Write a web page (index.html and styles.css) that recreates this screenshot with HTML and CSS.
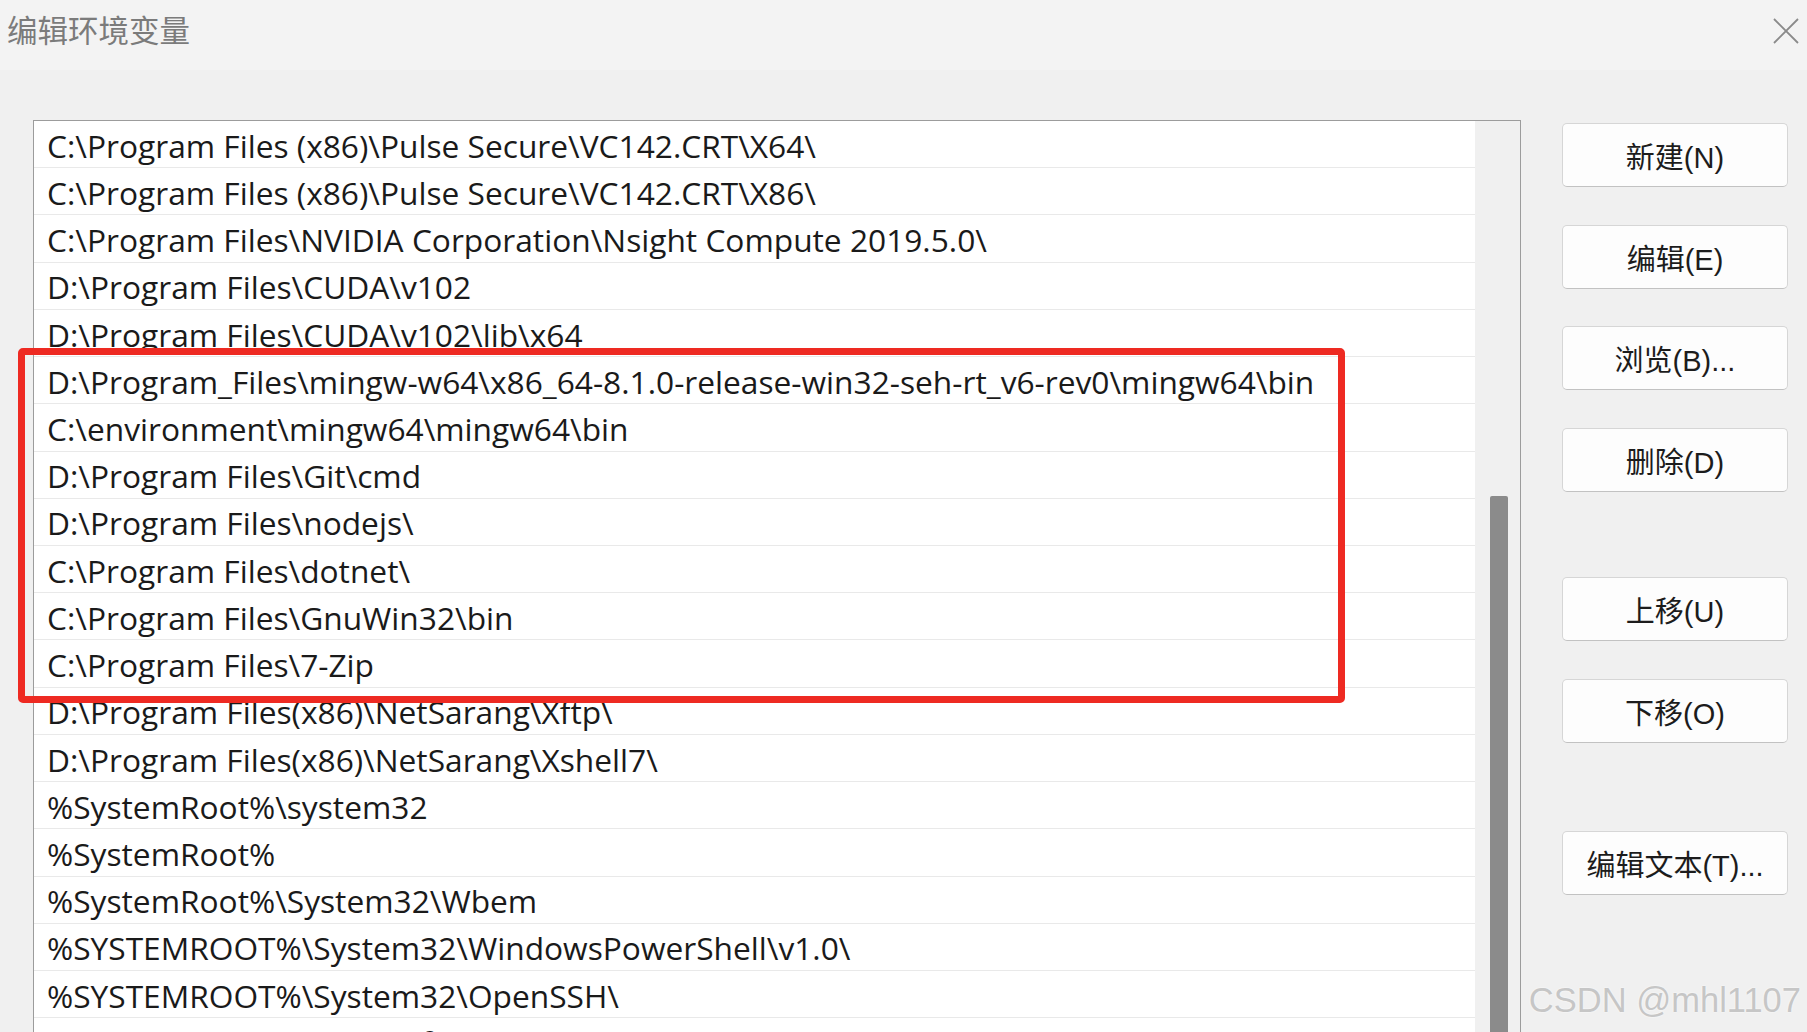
FILE: index.html
```html
<!DOCTYPE html>
<html lang="zh-CN">
<head>
  <meta charset="UTF-8">
  <title>编辑环境变量</title>
  <link rel="stylesheet" href="styles.css">
</head>
<body>
<div class="dialog">
  <header class="titlebar">
    <h1 class="title">编辑环境变量</h1>
    <button class="close" aria-label="关闭">
      <svg width="26" height="26" viewBox="0 0 26 26">
        <path d="M1 1 L25 25 M25 1 L1 25" stroke="#8a8a8a" stroke-width="1.8" fill="none"/>
      </svg>
    </button>
  </header>

  <div class="content">
    <div class="pathlist">
      <ul class="rows">
        <li>C:\Program Files (x86)\Pulse Secure\VC142.CRT\X64\</li>
        <li>C:\Program Files (x86)\Pulse Secure\VC142.CRT\X86\</li>
        <li>C:\Program Files\NVIDIA Corporation\Nsight Compute 2019.5.0\</li>
        <li>D:\Program Files\CUDA\v102</li>
        <li>D:\Program Files\CUDA\v102\lib\x64</li>
        <li>D:\Program_Files\mingw-w64\x86_64-8.1.0-release-win32-seh-rt_v6-rev0\mingw64\bin</li>
        <li>C:\environment\mingw64\mingw64\bin</li>
        <li>D:\Program Files\Git\cmd</li>
        <li>D:\Program Files\nodejs\</li>
        <li>C:\Program Files\dotnet\</li>
        <li>C:\Program Files\GnuWin32\bin</li>
        <li>C:\Program Files\7-Zip</li>
        <li>D:\Program Files(x86)\NetSarang\Xftp\</li>
        <li>D:\Program Files(x86)\NetSarang\Xshell7\</li>
        <li>%SystemRoot%\system32</li>
        <li>%SystemRoot%</li>
        <li>%SystemRoot%\System32\Wbem</li>
        <li>%SYSTEMROOT%\System32\WindowsPowerShell\v1.0\</li>
        <li>%SYSTEMROOT%\System32\OpenSSH\</li>
        <li>D:\Program Files\Microsoft VS Code\bin</li>
      </ul>
      <div class="scrolltrack">
        <div class="thumb"></div>
      </div>
      <div class="highlight"></div>
    </div>

    <div class="actions">
      <div class="group">
        <button class="btn">新建(N)</button>
        <button class="btn">编辑(E)</button>
        <button class="btn">浏览(B)...</button>
        <button class="btn">删除(D)</button>
      </div>
      <div class="group move">
        <button class="btn">上移(U)</button>
        <button class="btn">下移(O)</button>
      </div>
      <div class="group text">
        <button class="btn">编辑文本(T)...</button>
      </div>
    </div>
  </div>

  <div class="watermark">CSDN @mhl1107</div>
</div>
</body>
</html>
```

FILE: styles.css
```css
body {
  margin: 0;
  background: #f0f0f0;
  font-family: "Liberation Sans", "Noto Sans CJK SC", sans-serif;
  overflow: hidden;
  height: 1032px;
}

.dialog {
  position: relative;
  height: 1032px;
}

.titlebar {
  height: 70px;
  box-sizing: border-box;
  padding: 14px 8px 0 7px;
  background: #f3f3f3;
  display: flex;
  justify-content: space-between;
  align-items: flex-start;
}

.title {
  margin: 0;
  font-family: "Noto Sans CJK SC", sans-serif;
  font-size: 30.5px;
  line-height: 30px;
  font-weight: 400;
  color: #7b7b7b;
}

.close {
  margin-top: 4px;
  padding: 0;
  border: none;
  background: none;
  width: 26px;
  height: 26px;
}

.content {
  display: flex;
  align-items: flex-start;
  padding: 50px 19px 0 33px;
  gap: 41px;
}

.pathlist {
  position: relative;
  width: 1488px;
  box-sizing: border-box;
  height: 1000px;
  border: 1px solid #9c9c9c;
  background: #ffffff;
  display: grid;
  grid-template-columns: 1fr 45px;
}

.rows {
  list-style: none;
  margin: 0;
  padding: 0;
}

.rows li {
  box-sizing: border-box;
  height: 47.22px;
  padding: 6.7px 0 0 13px;
  border-bottom: 1px solid #e9e9e9;
  font-family: "Open Sans", sans-serif;
  font-size: 31.7px;
  line-height: 36px;
  color: #1a1a1a;
  white-space: nowrap;
}

.scrolltrack {
  background: #f0f0f0;
  display: flex;
  justify-content: center;
  padding-left: 2px;
}

.thumb {
  margin-top: 375px;
  width: 18px;
  height: 700px;
  background: #8b8b8b;
  border-radius: 2px;
}

.highlight {
  position: absolute;
  left: -16px;
  top: 227px;
  width: 1327px;
  height: 355px;
  box-sizing: border-box;
  border: 7px solid #ee2a22;
  border-radius: 5px;
}

.actions {
  margin-top: 3px;
  width: 226px;
  display: flex;
  flex-direction: column;
}

.group {
  display: flex;
  flex-direction: column;
  gap: 37.7px;
}

.group.move {
  margin-top: 85px;
  gap: 38px;
}

.group.text {
  margin-top: 88px;
}

.btn {
  height: 64px;
  box-sizing: border-box;
  background: #fdfdfd;
  border: 1px solid #d6d6d6;
  border-bottom-color: #c2c2c2;
  border-radius: 5px;
  font-family: "Liberation Sans", "Noto Sans CJK SC", sans-serif;
  font-size: 29px;
  color: #1c1c1c;
  padding: 0;
}

.watermark {
  position: absolute;
  right: 6px;
  bottom: 15px;
  font-size: 34.5px;
  line-height: 34px;
  color: #c6c6c6;
  text-shadow: 0 0 2px #ffffff;
}
```
